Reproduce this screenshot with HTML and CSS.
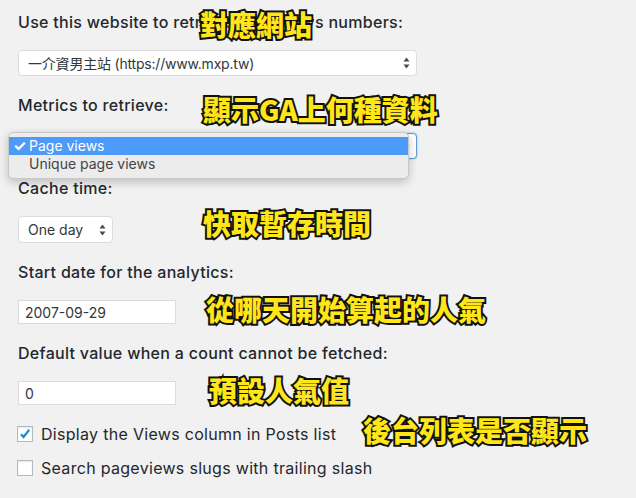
FILE: index.html
```html
<!DOCTYPE html>
<html lang="zh-Hant">
<head>
    <meta charset="UTF-8">
    <meta name="viewport" content="width=device-width, initial-scale=1.0">
    <title>Page views settings</title>
    <link rel="stylesheet" href="styles.css">
</head>
<body>
    <div class="settings">
        <div class="field">
            <label class="field-label">Use this website to retrieve pageviews numbers:</label>
            <div class="select select-wide">
                <span class="site-name">一介資男主站 (https://www.mxp.tw)</span>
                <svg class="arrows" width="7" height="12" viewBox="0 0 7 12"><path d="M3.5 0.5 L6.5 4.5 H0.5 Z M3.5 11.5 L6.5 7.5 H0.5 Z" fill="#4a4a4a"/></svg>
            </div>
        </div>

        <div class="field">
            <label class="field-label">Metrics to retrieve:</label>
            <div class="select select-wide focused">
                <span>Page views</span>
                <svg class="arrows" width="7" height="12" viewBox="0 0 7 12"><path d="M3.5 0.5 L6.5 4.5 H0.5 Z M3.5 11.5 L6.5 7.5 H0.5 Z" fill="#4a4a4a"/></svg>
            </div>
        </div>

        <div class="field">
            <label class="field-label">Cache time:</label>
            <div class="select select-small">
                <span>One day</span>
                <svg class="arrows" width="7" height="12" viewBox="0 0 7 12"><path d="M3.5 0.5 L6.5 4.5 H0.5 Z M3.5 11.5 L6.5 7.5 H0.5 Z" fill="#4a4a4a"/></svg>
            </div>
        </div>

        <div class="field">
            <label class="field-label">Start date for the analytics:</label>
            <input class="text-input" type="text" value="2007-09-29">
        </div>

        <div class="field">
            <label class="field-label">Default value when a count cannot be fetched:</label>
            <input class="text-input" type="text" value="0">
        </div>

        <div class="check-row first">
            <span class="checkbox">
                <svg width="14" height="14" viewBox="0 0 14 14"><path d="M3 7.2 L5.6 10 L11.2 2.8" fill="none" stroke="#1e8cbe" stroke-width="2.2"/></svg>
            </span>
            <span>Display the Views column in Posts list</span>
        </div>
        <div class="check-row">
            <span class="checkbox"></span>
            <span>Search pageviews slugs with trailing slash</span>
        </div>
    </div>

    <!-- open dropdown of the metrics select -->
    <ul class="dropdown">
        <li class="selected"><span class="tick">✓</span>Page views</li>
        <li><span class="tick"></span>Unique page views</li>
    </ul>

    <!-- yellow notes -->
    <div class="note note-site">對應網站</div>
    <div class="note note-metrics">顯示GA上何種資料</div>
    <div class="note note-cache">快取暫存時間</div>
    <div class="note note-date">從哪天開始算起的人氣</div>
    <div class="note note-default">預設人氣值</div>
    <div class="note note-list">後台列表是否顯示</div>
</body>
</html>
```

FILE: styles.css
```css
body {
    margin: 0;
    background-color: #f1f1f1;
    color: #23282d;
    font-family: Inter, "Liberation Sans", "Noto Sans CJK TC", sans-serif;
    font-size: 16px;
    letter-spacing: 0.3px;
}

.settings {
    padding: 12px 18px;
}

.field {
    margin-bottom: 19px;
}

.field-label {
    display: block;
    line-height: 20px;
    margin-bottom: 18px;
    font-weight: 500;
}

.select {
    box-sizing: border-box;
    height: 26px;
    display: flex;
    align-items: center;
    justify-content: space-between;
    padding: 0 6px 0 9px;
    background-color: white;
    border: 1px solid #dcdcdc;
    border-radius: 4px;
    font-size: 14px;
    letter-spacing: 0;
    color: #32373c;
}
.select-wide {
    width: 399px;
}
.select-small {
    width: 95px;
    height: 27px;
}
.site-name {
    font-size: 14px;
    letter-spacing: -0.2px;
}
.focused {
    border-color: #5b9dd9;
    box-shadow: 0 0 2px rgba(30, 140, 190, .6);
}

.text-input {
    display: block;
    box-sizing: border-box;
    width: 158px;
    height: 24px;
    margin: 0;
    padding: 0 6px;
    border: 1px solid #dcdcdc;
    background-color: white;
    font-family: inherit;
    font-size: 14px;
    color: #32373c;
}

.check-row {
    display: flex;
    align-items: center;
    gap: 8px;
    height: 20px;
    margin-left: -1px;
    margin-top: 14px;
}
.check-row.first {
    margin-top: 19px;
}
.checkbox {
    box-sizing: border-box;
    width: 16px;
    height: 16px;
    display: flex;
    align-items: center;
    justify-content: center;
    background-color: white;
    border: 1px solid #b4b9be;
    box-shadow: inset 0 1px 2px rgba(0, 0, 0, .1);
}

.dropdown {
    position: absolute;
    left: 8px;
    top: 132px;
    box-sizing: border-box;
    width: 401px;
    height: 47px;
    margin: 0;
    padding: 4px 0;
    list-style: none;
    background-color: #ececec;
    border: 1px solid #c8c8c8;
    border-radius: 5px;
    box-shadow: 0 3px 10px rgba(0, 0, 0, .22);
    font-size: 14px;
    letter-spacing: 0;
    color: #444;
}
.dropdown li {
    height: 18px;
    line-height: 18px;
    display: flex;
}
.dropdown .selected {
    background-color: #4c9bfb;
    color: white;
}
.tick {
    width: 16px;
    padding-left: 4px;
    font-size: 15px;
    font-weight: bold;
}

.note {
    position: absolute;
    font-family: "Noto Sans CJK TC", sans-serif;
    font-weight: 900;
    font-size: 28px;
    line-height: 32px;
    letter-spacing: 0;
    color: #ffe619;
    -webkit-text-stroke: 4px #111;
    paint-order: stroke fill;
    white-space: nowrap;
}
.note-site { left: 200px; top: 8px; }
.note-metrics { left: 203px; top: 93px; }
.note-cache { left: 203px; top: 207px; }
.note-date { left: 206px; top: 293px; }
.note-default { left: 209px; top: 374px; }
.note-list { left: 363px; top: 414px; }
```
